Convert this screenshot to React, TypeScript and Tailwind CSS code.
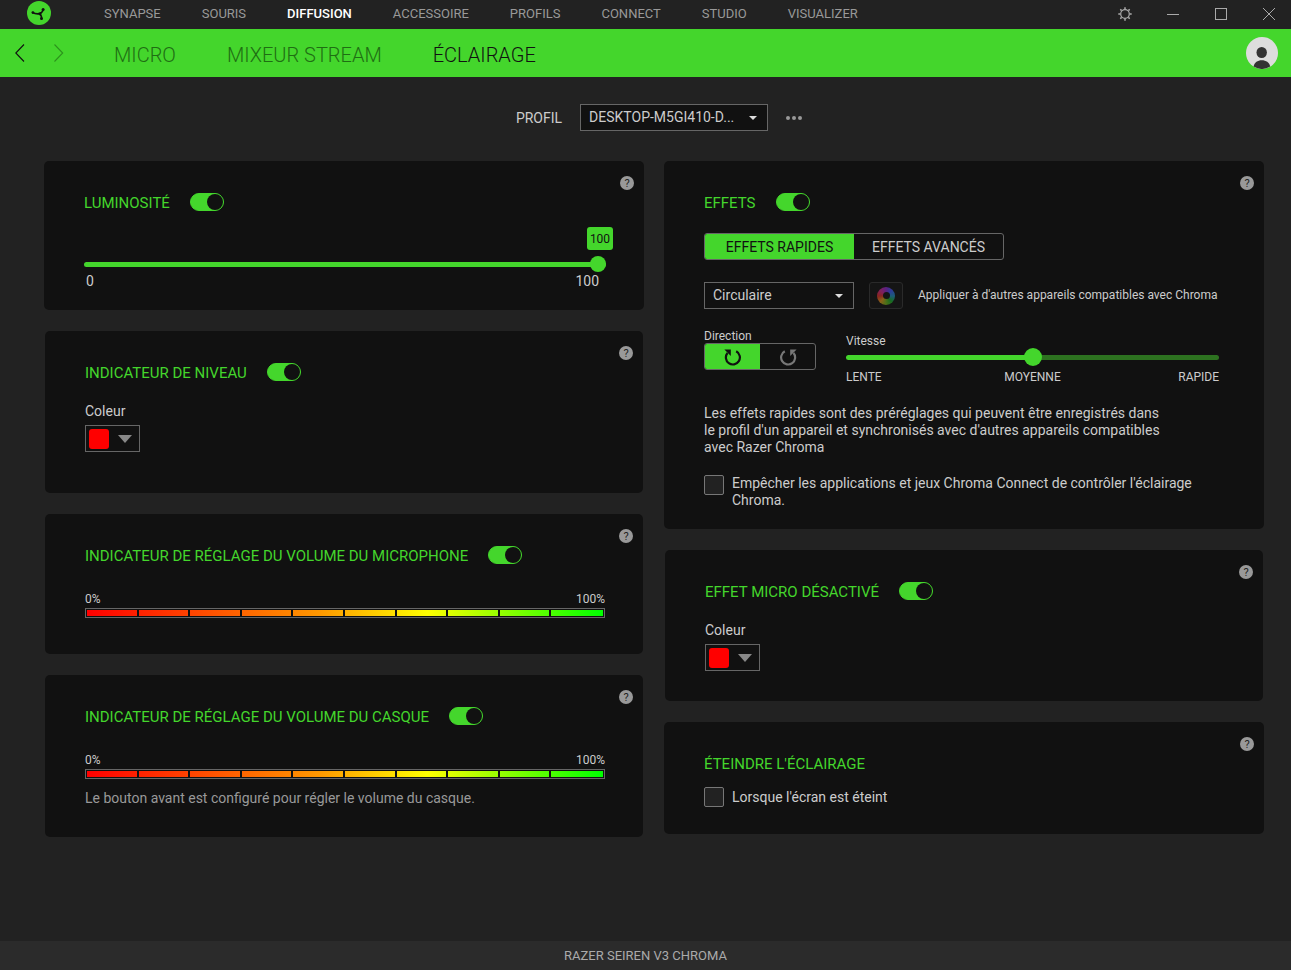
import { useState, type ReactNode } from "react";

const TOP_LINKS = ["SYNAPSE", "SOURIS", "DIFFUSION", "ACCESSOIRE", "PROFILS", "CONNECT", "STUDIO", "VISUALIZER"];
const TABS = ["MICRO", "MIXEUR STREAM", "ÉCLAIRAGE"];

function Logo() {
  return (
    <svg viewBox="0 0 24 24" className="size-6 shrink-0" aria-hidden="true">
      <circle cx="12" cy="12" r="12" fill="#44d62c" />
      <g fill="none" stroke="#111" strokeWidth="1.600" strokeLinecap="round">
        <path d="M5.800 11.700c2 1.300 4.300 1.300 6.700 1.100" />
        <path d="M16.100 8.600c-.3 2-1.700 3.300-3.600 4.200" />
        <path d="M14.600 17.600c.3-1.900-.5-3.400-2.100-4.800" />
      </g>
      <g fill="#111">
        <circle cx="5.900" cy="11.600" r="1.400" />
        <circle cx="16.100" cy="8.500" r="1.500" />
        <circle cx="14.500" cy="17.600" r="1.500" />
        <path d="M10 12.200l4.600-1.500-.3 4.300z" />
      </g>
    </svg>
  );
}

function GearIcon() {
  return (
    <svg viewBox="0 0 14 14" className="size-3.5" fill="none" stroke="currentColor" aria-hidden="true">
      <circle cx="7" cy="7" r="4.300" strokeWidth="1.200" />
      <path
        strokeWidth="1.500"
        d="M7 .3v2M7 11.700v2M.3 7h2M11.700 7h2M2.300 2.300l1.300 1.300M10.400 10.400l1.300 1.300M2.300 11.700l1.300-1.300M10.400 3.600l1.300-1.300"
      />
    </svg>
  );
}

function CaretIcon() {
  return (
    <svg viewBox="0 0 8 4" className="pointer-events-none absolute top-1/2 right-[11px] h-1 w-2 -translate-y-1/2" aria-hidden="true">
      <path d="M0 0h8L4 4z" fill="#ddd" />
    </svg>
  );
}

function RotateIcon({ mirrored = false }: { mirrored?: boolean }) {
  return (
    <svg viewBox="0 0 18 18" className="size-[18px]" aria-hidden="true">
      <g transform={mirrored ? "matrix(-1 0 0 1 18 0)" : undefined}>
        <path d="M12.200 3.300A7 7 0 1 1 3.500 5" fill="none" stroke="currentColor" strokeWidth="2.200" />
        <path d="M.4 1.500h6.400v6.400z" fill="currentColor" />
      </g>
    </svg>
  );
}

function Toggle({ label }: { label: string }) {
  return (
    <input
      type="checkbox"
      role="switch"
      defaultChecked
      aria-label={label}
      className="flex h-[18px] w-[34px] shrink-0 cursor-pointer appearance-none items-center rounded-full border border-[#44d62c] before:size-4 before:rounded-full before:bg-[#44d62c] checked:justify-end checked:bg-[#44d62c] checked:before:bg-[#111]"
    />
  );
}

function Card({ title, toggle = true, className, children }: { title: string; toggle?: boolean; className: string; children: ReactNode }) {
  return (
    <section className={`relative rounded-[5px] bg-[#111] pt-8 pl-10 ${className}`}>
      <div className="flex h-[18px] items-center gap-5">
        <h2 className="pt-0.5 text-[15px] leading-[18px] text-[#44d62c]">{title}</h2>
        {toggle && <Toggle label={title} />}
      </div>
      <button
        type="button"
        aria-label="Aide"
        className="absolute top-[15px] right-2.5 flex size-3.5 items-center justify-center rounded-full bg-[#999] text-[11px] leading-none text-[#222]"
      >
        ?
      </button>
      {children}
    </section>
  );
}

function ColorPicker({ title }: { title: string }) {
  return (
    <div className="mt-[22px] flex flex-col items-start gap-1.5">
      <span className="text-sm leading-4">Coleur</span>
      <button type="button" aria-label={`Coleur, ${title}`} className="flex h-[27px] w-[55px] items-center gap-[9px] border border-[#666] pl-[3px]">
        <span className="size-5 rounded-[3px] bg-[#f00]" />
        <svg viewBox="0 0 14 8" className="h-2 w-3.5" aria-hidden="true">
          <path d="M0 0h14L7 8z" fill="#888" />
        </svg>
      </button>
    </div>
  );
}

function VolumeMeter() {
  return (
    <div className="mt-[27px]">
      <div className="flex justify-between text-xs leading-4">
        <span>0%</span>
        <span>100%</span>
      </div>
      <div className="mt-px border border-[#666] p-px">
        <div className="grid h-1.5 grid-cols-10 bg-[linear-gradient(90deg,#f00_0%,#ff9800_45%,#ff0_66%,#0f0_100%)]">
          {Array.from({ length: 10 }, (_, i) => (
            <span key={i} className="border-r-2 border-[#111] last:border-r-0" />
          ))}
        </div>
      </div>
    </div>
  );
}

function Tick({ centered = false, children }: { centered?: boolean; children: ReactNode }) {
  return (
    <label className={`flex gap-2 text-sm leading-[17px] ${centered ? "items-center" : "items-start"}`}>
      <input
        type="checkbox"
        className="size-5 shrink-0 appearance-none rounded-[2px] border border-[#777] bg-[#222] checked:bg-[#44d62c]"
      />
      <span>{children}</span>
    </label>
  );
}

const THUMB =
  "[&::-webkit-slider-thumb]:appearance-none [&::-webkit-slider-thumb]:rounded-full [&::-webkit-slider-thumb]:bg-[#44d62c] [&::-webkit-slider-runnable-track]:bg-transparent";

function fill(percent: number) {
  return { backgroundImage: `linear-gradient(90deg, #44d62c ${percent}%, #2d7220 ${percent}%)` };
}

function Brightness() {
  const [value, setValue] = useState(100);
  return (
    <div className="relative mt-[45px]">
      <output
        className="absolute bottom-full mb-1.5 flex h-[23px] w-[26px] -translate-x-1/2 items-center justify-center rounded-[3px] bg-[#44d62c] text-xs text-[#111]"
        style={{ left: `calc(10px + (100% - 16px) * ${value / 100})` }}
      >
        {value}
      </output>
      <div className="relative flex h-4 items-center">
        <div className="h-[5px] w-full rounded-full" style={fill(value)} />
        <input
          type="range"
          aria-label="LUMINOSITÉ"
          min={0}
          max={100}
          value={value}
          onChange={(e) => setValue(Number(e.target.value))}
          className={`absolute inset-0 m-0 h-4 w-full appearance-none bg-transparent [&::-webkit-slider-thumb]:size-4 ${THUMB}`}
        />
      </div>
      <div className="mt-px flex justify-between pr-[7px] pl-0.5 text-sm leading-4">
        <span>0</span>
        <span>100</span>
      </div>
    </div>
  );
}

function Speed() {
  const [value, setValue] = useState(50);
  return (
    <div className="flex-1 pt-[5px] text-xs leading-[14px]">
      <label htmlFor="vitesse" className="block">
        Vitesse
      </label>
      <div className="relative flex h-[18px] items-center">
        <div className="h-[5px] w-full rounded-full" style={fill(value)} />
        <input
          id="vitesse"
          type="range"
          min={0}
          max={100}
          value={value}
          onChange={(e) => setValue(Number(e.target.value))}
          className={`absolute inset-0 m-0 h-[18px] w-full appearance-none bg-transparent [&::-webkit-slider-thumb]:size-[18px] ${THUMB}`}
        />
      </div>
      <div className="mt-1 grid grid-cols-3">
        <span>LENTE</span>
        <span className="text-center">MOYENNE</span>
        <span className="text-right">RAPIDE</span>
      </div>
    </div>
  );
}

export default function App() {
  return (
    <div className="flex min-h-screen flex-col bg-[#222] font-['Roboto',sans-serif] text-[#ccc]">
      <header className="flex h-[29px] items-center justify-between pr-1.5 pb-[3px] pl-[27px]">
        <div className="flex items-center gap-[53px]">
          <Logo />
          <nav className="flex gap-[41px] pt-px text-[13px] leading-4 text-[#999]">
            {TOP_LINKS.map((name) => (
              <a key={name} href="#" className={name === "DIFFUSION" ? "font-medium text-white" : ""}>
                {name}
              </a>
            ))}
          </nav>
        </div>
        <div className="flex gap-4 pt-0.5 text-[#aaa]">
          <button type="button" aria-label="Paramètres" className="flex h-6 w-8 items-center justify-center">
            <GearIcon />
          </button>
          <button type="button" aria-label="Réduire" className="flex h-6 w-8 items-center justify-center">
            <span className="h-px w-3 bg-[#aaa]" />
          </button>
          <button type="button" aria-label="Agrandir" className="flex h-6 w-8 items-center justify-center">
            <span className="size-3 border border-[#aaa]" />
          </button>
          <button type="button" aria-label="Fermer" className="flex h-6 w-8 items-center justify-center">
            <svg viewBox="0 0 14 14" className="size-3.5" stroke="currentColor" aria-hidden="true">
              <path d="M1 1l12 12M13 1L1 13" />
            </svg>
          </button>
        </div>
      </header>

      <div className="flex h-12 items-center justify-between bg-[#44d62c] pr-[13px] pl-[15px]">
        <div className="flex items-center">
          <button type="button" aria-label="Précédent" className="text-[#111]">
            <svg viewBox="0 0 10 20" className="h-5 w-2.5" fill="none" stroke="currentColor" strokeWidth="1.100" aria-hidden="true">
              <path d="M9 1.500L.8 10 9 18.500" />
            </svg>
          </button>
          <button type="button" aria-label="Suivant" className="ml-[29px] text-[#2c921c]">
            <svg viewBox="0 0 10 20" className="h-5 w-2.5" fill="none" stroke="currentColor" strokeWidth="1.100" aria-hidden="true">
              <path d="M.5 1.500L8.700 10 .5 18.500" />
            </svg>
          </button>
          <nav className="ml-[50px] flex gap-[51px] pt-[3px] text-xl leading-6 font-light">
            {TABS.map((name) => (
              <a key={name} href="#" className={name === "ÉCLAIRAGE" ? "text-[#111]" : "text-[#1f6e13]"}>
                {name}
              </a>
            ))}
          </nav>
        </div>
        <button type="button" aria-label="Compte">
          <svg viewBox="0 0 32 32" className="size-8" aria-hidden="true">
            <circle cx="16" cy="16" r="16" fill="#ddd" />
            <ellipse cx="15.700" cy="15.500" rx="5.200" ry="5.500" fill="#333" />
            <path d="M7.600 29.500c.8-4 4-6.200 8.200-6.200s7.600 2.200 8.400 6.200A16 16 0 0 1 7.600 29.500z" fill="#333" />
          </svg>
        </button>
      </div>

      <main className="flex-1 pt-[27px] pr-[27px] pb-10 pl-11">
        <div className="flex items-center justify-center pl-2.5 text-sm">
          <label htmlFor="profil">PROFIL</label>
          <div className="relative ml-[18px]">
            <select id="profil" className="block h-[27px] w-[188px] appearance-none border border-[#666] bg-[#111] pr-6 pb-px pl-2">
              <option>DESKTOP-M5GI410-D...</option>
            </select>
            <CaretIcon />
          </div>
          <button type="button" aria-label="Plus d'options" className="ml-[18px] flex gap-0.5">
            <span className="size-1 rounded-full bg-[#999]" />
            <span className="size-1 rounded-full bg-[#999]" />
            <span className="size-1 rounded-full bg-[#999]" />
          </button>
        </div>

        <div className="mt-[30px] grid grid-cols-2 items-start gap-5">
          <div className="flex flex-col gap-[21px]">
            <Card title="LUMINOSITÉ" className="pr-[38px] pb-[21px]">
              <Brightness />
            </Card>
            <Card title="INDICATEUR DE NIVEAU" className="mx-px pr-10 pb-[41px]">
              <ColorPicker title="indicateur de niveau" />
            </Card>
            <Card title="INDICATEUR DE RÉGLAGE DU VOLUME DU MICROPHONE" className="mx-px pr-[38px] pb-9">
              <VolumeMeter />
            </Card>
            <Card title="INDICATEUR DE RÉGLAGE DU VOLUME DU CASQUE" className="mx-px pr-[38px] pb-[31px]">
              <VolumeMeter />
              <p className="mt-[11px] text-sm leading-4 text-[#999]">Le bouton avant est configuré pour régler le volume du casque.</p>
            </Card>
          </div>

          <div className="flex flex-col gap-[21px]">
            <Card title="EFFETS" className="pr-[45px] pb-5">
              <div className="mt-[22px] flex h-[27px] w-[300px] overflow-hidden rounded-[3px] border border-[#666] text-sm">
                <button type="button" className="flex-1 bg-[#44d62c] text-[#111]">
                  EFFETS RAPIDES
                </button>
                <button type="button" className="flex-1">
                  EFFETS AVANCÉS
                </button>
              </div>

              <div className="mt-[22px] flex items-center">
                <div className="relative">
                  <select aria-label="Effet" className="block h-[27px] w-[150px] appearance-none border border-[#666] bg-[#111] pr-6 pb-px pl-2 text-sm">
                    <option>Circulaire</option>
                  </select>
                  <CaretIcon />
                </div>
                <button
                  type="button"
                  aria-label="Chroma"
                  className="ml-[15px] flex h-[27px] w-[34px] items-center justify-center rounded-[3px] border border-[#2a2a2a] bg-[#151515]"
                >
                  <span className="flex size-[18px] items-center justify-center rounded-full bg-[conic-gradient(#5c2080,#2c3c98,#1c5c78,#176a20,#4c7018,#8a6018,#8a2420,#80205c,#5c2080)]">
                    <span className="size-[7px] rounded-full bg-[#151515]" />
                  </span>
                </button>
                <span className="ml-[15px] pb-px text-xs">Appliquer à d'autres appareils compatibles avec Chroma</span>
              </div>

              <div className="mt-5 flex gap-[30px]">
                <div className="w-28">
                  <div className="text-xs leading-[14px]">Direction</div>
                  <div className="flex h-[27px] overflow-hidden rounded-[3px] border border-[#666]">
                    <button type="button" aria-label="Sens horaire" className="flex flex-1 items-center justify-center bg-[#44d62c] text-[#111]">
                      <RotateIcon />
                    </button>
                    <button type="button" aria-label="Sens antihoraire" className="flex flex-1 items-center justify-center text-[#777]">
                      <RotateIcon mirrored />
                    </button>
                  </div>
                </div>
                <Speed />
              </div>

              <p className="mt-[21px] max-w-[460px] text-sm leading-[17px]">
                Les effets rapides sont des préréglages qui peuvent être enregistrés dans le profil d'un appareil et synchronisés avec
                d'autres appareils compatibles avec Razer Chroma
              </p>

              <div className="mt-[19px]">
                <Tick>Empêcher les applications et jeux Chroma Connect de contrôler l'éclairage Chroma.</Tick>
              </div>
            </Card>

            <Card title="EFFET MICRO DÉSACTIVÉ" className="mx-px pr-10 pb-[30px]">
              <ColorPicker title="effet micro désactivé" />
            </Card>

            <Card title="ÉTEINDRE L'ÉCLAIRAGE" toggle={false} className="pr-10 pb-[27px]">
              <div className="mt-[15px]">
                <Tick centered>Lorsque l'écran est éteint</Tick>
              </div>
            </Card>
          </div>
        </div>
      </main>

      <footer className="flex h-[29px] items-center justify-center bg-[#2b2b2b] text-[13px] text-[#aaa]">RAZER SEIREN V3 CHROMA</footer>
    </div>
  );
}
